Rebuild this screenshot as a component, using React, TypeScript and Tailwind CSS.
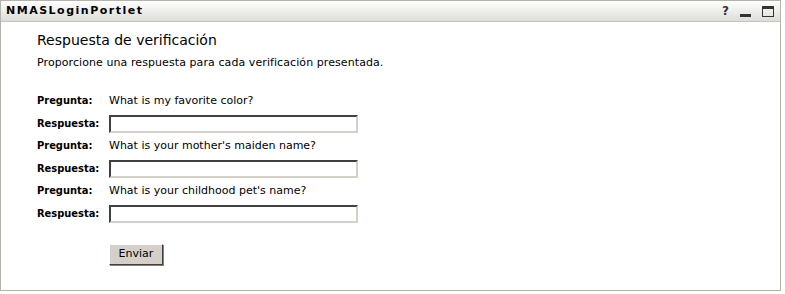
import React from "react";

const questions = [
  "What is my favorite color?",
  "What is your mother's maiden name?",
  "What is your childhood pet's name?",
];

export default function App() {
  return (
    <div className="w-[785px] h-[294px] bg-white" style={{ fontFamily: '"DejaVu Sans", Verdana, sans-serif' }}>
      <div className="w-[781px] h-[291px] border border-[#b4b4ac] flex flex-col">
        {/* title bar */}
        <div className="h-[21px] flex items-center justify-between pl-[5px] pr-[6px] bg-gradient-to-b from-white to-[#dcdcd8] border-b border-[#c4c4bc]">
          <span className="text-[11px] font-bold tracking-[1.5px] text-black">NMASLoginPortlet</span>
          <div className="flex items-center gap-[11px] text-[#333]">
            <span className="text-[12px] font-bold leading-none">?</span>
            <span className="w-[11px] h-[3px] bg-[#333] mt-[8px]" />
            <span className="w-[12px] h-[11px] border border-[#333] border-t-[3px]" />
          </div>
        </div>

        <div className="pl-[36px] pt-[9px] text-black">
          <h1 className="text-[14px] leading-[18px]">Respuesta de verificación</h1>
          <p className="text-[11px] mt-[7px] leading-[14px] tracking-[0.08px]">Proporcione una respuesta para cada verificación presentada.</p>

          <div className="mt-[23px] flex flex-col gap-[5.5px] text-[11px]">
            {questions.map((q) => (
              <React.Fragment key={q}>
                <div className="flex items-center h-[17px]">
                  <span className="w-[72px] font-bold" style={{ fontFamily: '"DejaVu Sans Condensed", "DejaVu Sans", sans-serif' }}>Pregunta:</span>
                  <span>{q}</span>
                </div>
                <div className="flex items-center h-[17px]">
                  <span className="w-[72px] font-bold" style={{ fontFamily: '"DejaVu Sans Condensed", "DejaVu Sans", sans-serif' }}>Respuesta:</span>
                  <input
                    type="text"
                    className="w-[249px] h-[18px] border-2 border-t-[#404040] border-l-[#404040] border-b-[#d4d0c8] border-r-[#d4d0c8] bg-white outline-none"
                  />
                </div>
              </React.Fragment>
            ))}
          </div>

          <button className="ml-[72px] mt-[21px] w-[54px] h-[21px] bg-[#d4d0c8] text-[11px] border border-t-white border-l-white border-b-[#404040] border-r-[#404040] shadow-[1px_1px_0_#808080]">
            Enviar
          </button>
        </div>
      </div>
    </div>
  );
}
